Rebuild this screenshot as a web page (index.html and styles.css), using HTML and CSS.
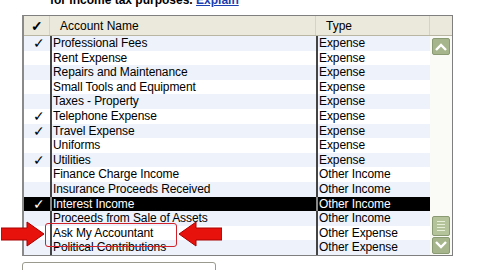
FILE: index.html
```html
<!DOCTYPE html>
<html lang="en">
<head>
    <meta charset="UTF-8">
    <link rel="stylesheet" href="styles.css">
</head>
<body>

<p class="intro">for income tax purposes. <a href="#">Explain</a></p>

<div class="list-frame">
    <div class="list-head">
        <div class="hcell check">&#10003;</div>
        <div class="hcell name">Account Name</div>
        <div class="hcell type">Type</div>
        <div class="hcell corner"></div>
    </div>
    <div class="list-body">
        <div class="rows">
            <div class="row alt"><span class="check">&#10003;</span><span class="name">Professional Fees</span><span class="type">Expense</span></div>
            <div class="row"><span class="check"></span><span class="name">Rent Expense</span><span class="type">Expense</span></div>
            <div class="row alt"><span class="check"></span><span class="name">Repairs and Maintenance</span><span class="type">Expense</span></div>
            <div class="row"><span class="check"></span><span class="name">Small Tools and Equipment</span><span class="type">Expense</span></div>
            <div class="row alt"><span class="check"></span><span class="name">Taxes - Property</span><span class="type">Expense</span></div>
            <div class="row"><span class="check">&#10003;</span><span class="name">Telephone Expense</span><span class="type">Expense</span></div>
            <div class="row alt"><span class="check">&#10003;</span><span class="name">Travel Expense</span><span class="type">Expense</span></div>
            <div class="row"><span class="check"></span><span class="name">Uniforms</span><span class="type">Expense</span></div>
            <div class="row alt"><span class="check">&#10003;</span><span class="name">Utilities</span><span class="type">Expense</span></div>
            <div class="row"><span class="check"></span><span class="name">Finance Charge Income</span><span class="type">Other Income</span></div>
            <div class="row alt"><span class="check"></span><span class="name">Insurance Proceeds Received</span><span class="type">Other Income</span></div>
            <div class="row selected"><span class="check">&#10003;</span><span class="name">Interest Income</span><span class="type">Other Income</span></div>
            <div class="row alt"><span class="check"></span><span class="name">Proceeds from Sale of Assets</span><span class="type">Other Income</span></div>
            <div class="row"><span class="check"></span><span class="name">Ask My Accountant</span><span class="type">Other Expense</span></div>
            <div class="row alt"><span class="check"></span><span class="name">Political Contributions</span><span class="type">Other Expense</span></div>
        </div>
        <div class="scrollbar">
            <div class="sb-btn">
                <svg width="12" height="8" viewBox="0 0 12 8"><path d="M1 7 L6 2 L11 7" fill="none" stroke="#fff" stroke-width="2.4"/></svg>
            </div>
            <div class="sb-track"></div>
            <div class="sb-thumb">
                <i></i><i></i><i></i><i></i>
            </div>
            <div class="sb-btn">
                <svg width="12" height="8" viewBox="0 0 12 8"><path d="M1 1 L6 6 L11 1" fill="none" stroke="#fff" stroke-width="2.4"/></svg>
            </div>
        </div>
    </div>

    <!-- highlight callout -->
    <div class="callout"></div>
    <svg class="arrow arrow-left" width="44" height="26" viewBox="0 0 44 26">
        <path d="M0 7 H26 V1 L43 13 L26 25 V19 H0 Z" fill="#e8120c" stroke="#a80000" stroke-width="1"/>
    </svg>
    <svg class="arrow arrow-right" width="44" height="26" viewBox="0 0 44 26">
        <path d="M44 7 H18 V1 L1 13 L18 25 V19 H44 Z" fill="#e8120c" stroke="#a80000" stroke-width="1"/>
    </svg>
</div>

<div class="bottom-box"></div>

</body>
</html>
```

FILE: styles.css
```css
body {
    margin: 0;
    width: 480px;
    height: 270px;
    overflow: hidden;
    background: #fff;
    font-family: Tahoma, 'DejaVu Sans', sans-serif;
    font-size: 11px;
    color: #000;
    position: relative;
}

.intro {
    margin: -7px 0 0 50px;
    height: 14px;
    font-weight: bold;
    font-size: 12px;
    font-family: 'Liberation Sans', Arial, sans-serif;
}
.intro a {
    color: #1a3fb0;
}

.list-frame {
    position: relative;
    margin: 8px 0 0 22px;
    width: 428px;
    border: 1px solid #7f7f7f;
    border-left: 2px solid #8a8a8a;
    background: #fff;
}

.list-head {
    display: grid;
    grid-template-columns: 26px 266px 114px 1fr;
    height: 19px;
    background: #ebe9dc;
    border-bottom: 1px solid #b9b6a4;
}
.hcell {
    display: flex;
    align-items: center;
    border-right: 1px solid #d6d3c4;
    font-family: 'Liberation Sans', Arial, sans-serif;
    font-size: 12px;
}
.hcell.check {
    justify-content: center;
    font-weight: bold;
    font-size: 14px;
}
.hcell.name { padding-left: 10px; }
.hcell.type { padding-left: 10px; }
.hcell.corner { border-right: none; }

.list-body {
    display: flex;
}
.rows {
    width: 406px;
}
.row {
    display: grid;
    grid-template-columns: 26px 266px 114px;
    height: 14.6px;
    line-height: 14px;
    font-family: 'Liberation Sans', Arial, sans-serif;
    font-size: 12px;
    letter-spacing: -0.1px;
    background: #fff;
    white-space: nowrap;
}
.row.alt { background: #eef2fb; }
.row .check {
    text-align: center;
    font-size: 14px;
    padding-left: 4px;
}
.row .name,
.row .type {
    border-left: 2px solid #444;
    padding-left: 1px;
}
.row.selected {
    background: #000;
    color: #fff;
}
.row.selected .name,
.row.selected .type {
    border-left-color: #888;
}

.scrollbar {
    flex: 1;
    display: flex;
    flex-direction: column;
    background: #fafaf6;
    padding: 2px 2px 1px 2px;
}
.sb-btn {
    height: 15px;
    background: #a6b58c;
    border: 1px solid #8a9a72;
    border-radius: 2px;
    display: flex;
    align-items: center;
    justify-content: center;
}
.sb-track { flex: 1; }
.sb-thumb {
    height: 18px;
    background: #b4c39a;
    border: 1px solid #8a9a72;
    border-radius: 2px;
    display: flex;
    flex-direction: column;
    align-items: center;
    justify-content: center;
    gap: 2px;
    margin-bottom: 1px;
}
.sb-thumb i {
    display: block;
    width: 8px;
    height: 1px;
    background: #e6eed8;
}

.callout {
    position: absolute;
    left: 21px;
    top: 207px;
    width: 130px;
    height: 22px;
    border: 1px solid #d0222a;
    border-radius: 3px;
}
.arrow {
    position: absolute;
    top: 205px;
}
.arrow-left { left: -23px; }
.arrow-right { left: 154px; }

.bottom-box {
    margin: 6px 0 0 22px;
    width: 192px;
    height: 20px;
    border: 1px solid #9a9a8e;
    border-radius: 3px;
}
```
